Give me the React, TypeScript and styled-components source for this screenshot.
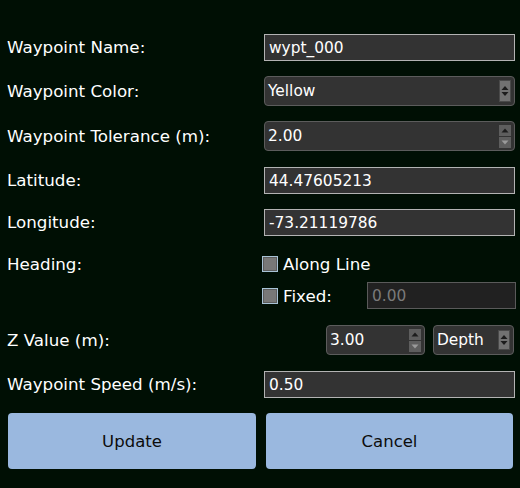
import React from 'react';
import styled, { createGlobalStyle } from 'styled-components';

const GlobalStyle = createGlobalStyle`
  html, body {
    margin: 0;
    padding: 0;
    background: #000f04;
  }
  body {
    font-family: "DejaVu Sans", Verdana, sans-serif;
    font-size: 15.4px;
    color: #ffffff;
  }
`;

const Dialog = styled.div`
  width: 520px;
  height: 488px;
  box-sizing: border-box;
  padding: 34px 5px 0 7px;
  display: flex;
  flex-direction: column;
  gap: 15px;
`;

const Row = styled.div<{ $h: number; $extra?: number }>`
  display: grid;
  grid-template-columns: 257px 1fr;
  align-items: center;
  height: ${p => p.$h}px;
  margin-top: ${p => p.$extra || 0}px;
`;

const Label = styled.div`
  white-space: nowrap;
  line-height: 1;
  font-size: 16.7px;
`;

const HeadingGroup = styled.div`
  display: grid;
  grid-template-columns: 255px 1fr;
  grid-template-rows: 26px 27px;
  row-gap: 5px;
  align-items: center;
`;

const LineEdit = styled.div<{ $disabled?: boolean; $width?: number }>`
  box-sizing: border-box;
  height: 27px;
  width: ${p => (p.$width ? `${p.$width}px` : '100%')};
  background: ${p => (p.$disabled ? '#212121' : '#333333')};
  border: 1px solid ${p => (p.$disabled ? '#5a5a5a' : '#b3b3b3')};
  color: ${p => (p.$disabled ? '#7a7a7a' : '#ffffff')};
  font-size: 15.4px;
  padding-left: 4px;
  display: flex;
  align-items: center;
`;

const Combo = styled.div<{ $width?: number }>`
  box-sizing: border-box;
  height: 30px;
  width: ${p => (p.$width ? `${p.$width}px` : '100%')};
  background: #333333;
  border: 1px solid #5c5c5c;
  border-radius: 4px;
  padding: 0 3px 0 3px;
  display: flex;
  align-items: center;
  justify-content: space-between;
`;

const ArrowBox = styled.div<{ $h: number }>`
  box-sizing: border-box;
  width: 12px;
  height: ${p => p.$h}px;
  background: #727272;
  border: 1px solid #4a4a4a;
  display: flex;
  align-items: center;
  justify-content: center;
`;

const SpinArrows = styled.div`
  width: 12px;
  height: 23px;
  display: flex;
  flex-direction: column;
  gap: 1px;
`;

const SpinHalf = styled.div`
  flex: 1;
  background: #5e5e5e;
  display: flex;
  align-items: center;
  justify-content: center;
`;

const ZFields = styled.div`
  display: flex;
  justify-content: flex-end;
  gap: 8px;
  padding-right: 1px;
`;

const CheckRow = styled.div`
  display: flex;
  align-items: center;
  gap: 5px;
  font-size: 16.7px;
`;

const CheckBox = styled.div`
  box-sizing: border-box;
  flex: none;
  width: 16px;
  height: 16px;
  border: 1px solid #a9c3d6;
  background: #787878;
  box-shadow: inset 0 0 0 1px #5c5c5c;
`;

const FixedLabel = styled.span`
  width: 79px;
`;

const Buttons = styled.div`
  display: grid;
  grid-template-columns: 248px 247px;
  gap: 10px;
  padding-left: 1px;
`;

const Button = styled.button`
  height: 56px;
  border: none;
  border-radius: 4px;
  background: #9ab8df;
  color: #0c0c0c;
  font-family: "DejaVu Sans", Verdana, sans-serif;
  font-size: 16.5px;
  padding: 0;
`;

const ComboArrow = ({ h }: { h: number }) => (
  <ArrowBox $h={h}>
    <svg width="8" height="12" viewBox="0 0 8 12">
      <path d="M4 1 L7.5 5 L0.5 5 Z M4 11 L7.5 7 L0.5 7 Z" fill="#1c1c1c" />
    </svg>
  </ArrowBox>
);

const SpinButtons = () => (
  <SpinArrows>
    <SpinHalf>
      <svg width="8" height="5" viewBox="0 0 8 5">
        <path d="M4 0.5 L7.5 4.5 L0.5 4.5 Z" fill="#1c1c1c" />
      </svg>
    </SpinHalf>
    <SpinHalf>
      <svg width="8" height="5" viewBox="0 0 8 5">
        <path d="M4 4.5 L7.5 0.5 L0.5 0.5 Z" fill="#9a9a9a" />
      </svg>
    </SpinHalf>
  </SpinArrows>
);

export default function App() {
  return (
    <Dialog>
      <GlobalStyle />
      <Row $h={27}>
        <Label>Waypoint Name:</Label>
        <LineEdit>wypt_000</LineEdit>
      </Row>
      <Row $h={30}>
        <Label>Waypoint Color:</Label>
        <Combo>
          <span>Yellow</span>
          <ComboArrow h={22} />
        </Combo>
      </Row>
      <Row $h={30}>
        <Label>Waypoint Tolerance (m):</Label>
        <Combo>
          <span>2.00</span>
          <SpinButtons />
        </Combo>
      </Row>
      <Row $h={27} $extra={1}>
        <Label>Latitude:</Label>
        <LineEdit>44.47605213</LineEdit>
      </Row>
      <Row $h={27}>
        <Label>Longitude:</Label>
        <LineEdit>-73.21119786</LineEdit>
      </Row>
      <HeadingGroup>
        <Label>Heading:</Label>
        <CheckRow>
          <CheckBox />
          <span>Along Line</span>
        </CheckRow>
        <span />
        <CheckRow>
          <CheckBox />
          <FixedLabel>Fixed:</FixedLabel>
          <LineEdit $disabled $width={149}>0.00</LineEdit>
        </CheckRow>
      </HeadingGroup>
      <Row $h={30} $extra={1}>
        <Label>Z Value (m):</Label>
        <ZFields>
          <Combo $width={99}>
            <span>3.00</span>
            <SpinButtons />
          </Combo>
          <Combo $width={81}>
            <span>Depth</span>
            <ComboArrow h={20} />
          </Combo>
        </ZFields>
      </Row>
      <Row $h={27} $extra={1}>
        <Label>Waypoint Speed (m/s):</Label>
        <LineEdit>0.50</LineEdit>
      </Row>
      <Buttons>
        <Button>Update</Button>
        <Button>Cancel</Button>
      </Buttons>
    </Dialog>
  );
}
